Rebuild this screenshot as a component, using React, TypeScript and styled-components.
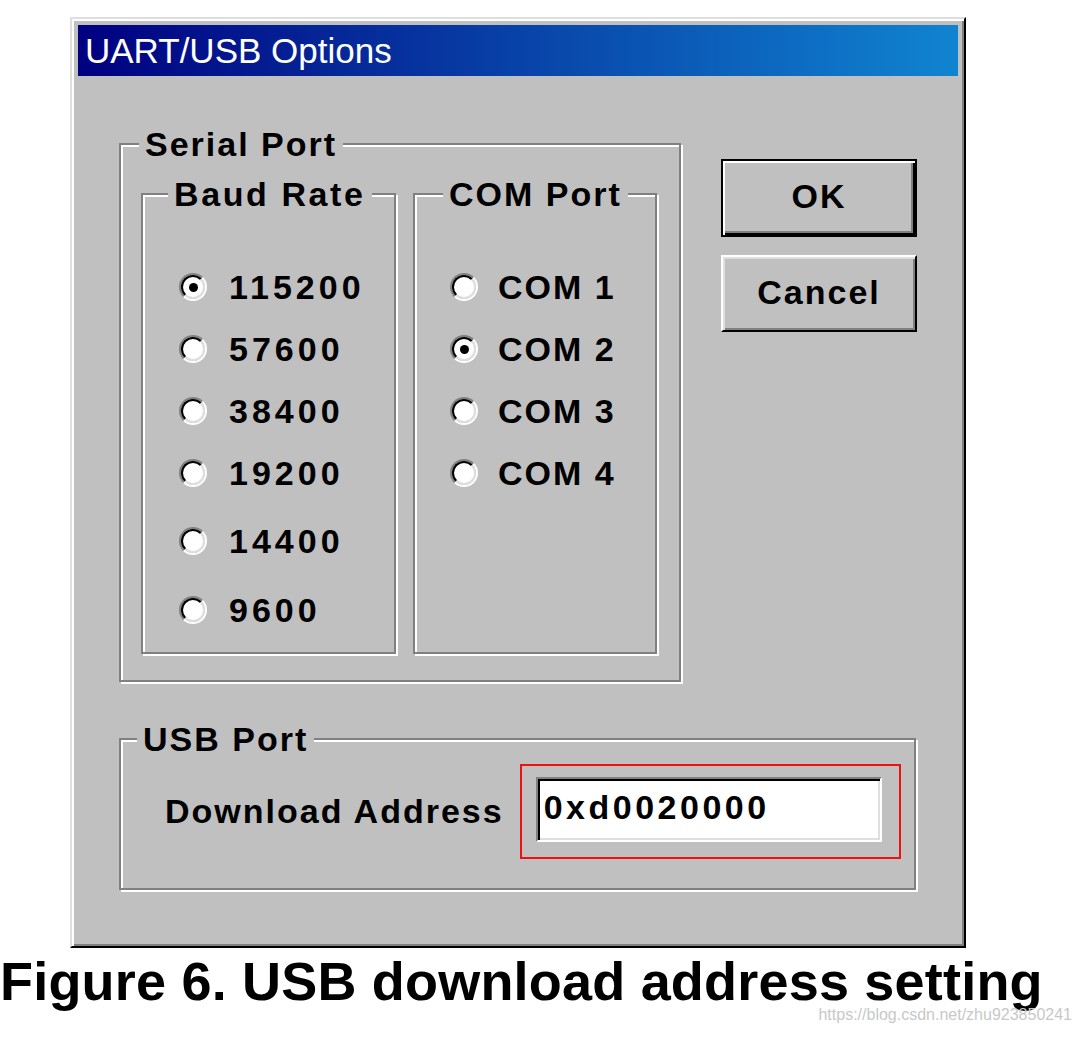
import React, { useState } from 'react';
import styled, { createGlobalStyle } from 'styled-components';

const GlobalStyle = createGlobalStyle`
	html, body {
		margin: 0;
		padding: 0;
		background: #fff;
	}
	body {
		font-family: 'Liberation Sans', Arial, sans-serif;
	}
	*, *::before, *::after {
		box-sizing: border-box;
	}
`;

const BAUD_RATES = ['115200', '57600', '38400', '19200', '14400', '9600'];
const COM_PORTS = ['COM 1', 'COM 2', 'COM 3', 'COM 4'];
// the last two baud rows sit a bit lower in the original dialog
const BAUD_OFFSETS = [0, 0, 0, 0, 6, 7];

const App: React.FC = () => {
	const [baud, setBaud] = useState<string>('115200');
	const [port, setPort] = useState<string>('COM 2');

	return (
		<SPage>
			<GlobalStyle />
			<SDialog>
				<STitleBar>UART/USB Options</STitleBar>
				<SBody>
					<STopRow>
						<SGroup $w={562} $h={539} $pad='48px 0 0 20px'>
							<SLegend $left={18}>Serial Port</SLegend>
							<SSubRow>
								<SGroup $w={255} $h={461} $pad='61px 0 0 36px'>
									<SLegend $left={25} $ls={2.6}>
										Baud Rate
									</SLegend>
									<SRadioList>
										{BAUD_RATES.map((rate, i) => (
											<SRadioRow key={rate} $mt={BAUD_OFFSETS[i]} $gap={22} onClick={() => setBaud(rate)}>
												<SRadio>
													<SRadioInner>{baud === rate && <SDot />}</SRadioInner>
												</SRadio>
												<SText $ls={4}>{rate}</SText>
											</SRadioRow>
										))}
									</SRadioList>
								</SGroup>
								<SGroup $w={244} $h={461} $pad='61px 0 0 35px'>
									<SLegend $left={28}>COM Port</SLegend>
									<SRadioList>
										{COM_PORTS.map((p) => (
											<SRadioRow key={p} $mt={0} $gap={20} onClick={() => setPort(p)}>
												<SRadio>
													<SRadioInner>{port === p && <SDot />}</SRadioInner>
												</SRadio>
												<SText $ls={2}>{p}</SText>
											</SRadioRow>
										))}
									</SRadioList>
								</SGroup>
							</SSubRow>
						</SGroup>
						<SButtons>
							<SButton type='button' $default>
								OK
							</SButton>
							<SButton type='button'>Cancel</SButton>
						</SButtons>
					</STopRow>
					<SGroup $w={797} $h={152} $pad='24px 0 0 44px' style={{ marginTop: 56 }}>
						<SLegend $left={16}>USB Port</SLegend>
						<SAddressRow>
							<SText $ls={2}>Download Address</SText>
							<SHighlight>
								<SField>0xd0020000</SField>
							</SHighlight>
						</SAddressRow>
					</SGroup>
				</SBody>
			</SDialog>
			<SCaption>Figure 6. USB download address setting</SCaption>
			<SWatermark>https://blog.csdn.net/zhu923850241</SWatermark>
		</SPage>
	);
};

export default App;

const SPage = styled.div`
	width: 1088px;
	padding-top: 17px;
`;

const SDialog = styled.div`
	margin-left: 70px;
	width: 896px;
	height: 931px;
	padding: 6px;
	background: #c0c0c0;
	border: 2px solid;
	border-color: #dfdfdf #000 #000 #dfdfdf;
	box-shadow: inset 2px 2px 0 #fff, inset -2px -2px 0 #808080;
`;

const STitleBar = styled.div`
	display: flex;
	align-items: center;
	height: 51px;
	padding-left: 7px;
	background: linear-gradient(to right, #000080, #1084d0);
	color: #fff;
	font-size: 35px;
	white-space: nowrap;
`;

const SBody = styled.div`
	padding: 67px 41px 0 41px;
`;

const STopRow = styled.div`
	display: flex;
	align-items: flex-start;
	gap: 40px;
`;

const SGroup = styled.div<{ $w: number; $h: number; $pad: string }>`
	position: relative;
	flex: none;
	width: ${(p) => p.$w}px;
	height: ${(p) => p.$h}px;
	padding: ${(p) => p.$pad};
	border: 2px solid #808080;
	box-shadow: inset 2px 2px 0 #fff, 2px 2px 0 #fff;
`;

const SLegend = styled.span<{ $left: number; $ls?: number }>`
	position: absolute;
	top: -18px;
	left: ${(p) => p.$left}px;
	padding: 0 6px;
	background: #c0c0c0;
	font-size: 34px;
	font-weight: 700;
	line-height: 34px;
	letter-spacing: ${(p) => p.$ls ?? 2}px;
	white-space: nowrap;
	color: #000;
`;

const SSubRow = styled.div`
	display: flex;
	gap: 17px;
`;

const SRadioList = styled.div`
	display: flex;
	flex-direction: column;
`;

const SRadioRow = styled.label<{ $mt: number; $gap: number }>`
	display: flex;
	align-items: center;
	gap: ${(p) => p.$gap}px;
	height: 62px;
	margin-top: ${(p) => p.$mt}px;
	cursor: default;
`;

const SRadio = styled.span`
	flex: none;
	width: 28px;
	height: 28px;
	border-radius: 50%;
	border: 2px solid;
	border-color: #808080 #fff #fff #808080;
`;

const SRadioInner = styled.span`
	display: flex;
	align-items: center;
	justify-content: center;
	width: 100%;
	height: 100%;
	border-radius: 50%;
	border: 2px solid;
	border-color: #000 #dfdfdf #dfdfdf #000;
	background: #fff;
`;

const SDot = styled.span`
	width: 9px;
	height: 9px;
	border-radius: 50%;
	background: #000;
`;

const SText = styled.span<{ $ls: number }>`
	font-size: 34px;
	font-weight: 700;
	letter-spacing: ${(p) => p.$ls}px;
	color: #000;
	white-space: nowrap;
`;

const SButtons = styled.div`
	display: flex;
	flex-direction: column;
	gap: 18px;
	margin-top: 16px;
`;

const SButton = styled.button<{ $default?: boolean }>`
	display: flex;
	align-items: center;
	justify-content: center;
	width: 196px;
	height: ${(p) => (p.$default ? 78 : 77)}px;
	padding: 0 0 3px;
	background: #c0c0c0;
	font-family: 'Liberation Sans', Arial, sans-serif;
	font-size: 34px;
	font-weight: 700;
	letter-spacing: 2px;
	color: #000;
	border: 2px solid;
	border-color: ${(p) => (p.$default ? '#000' : '#fff #000 #000 #fff')};
	box-shadow: ${(p) =>
		p.$default
			? 'inset 2px 2px 0 #fff, inset -2px -2px 0 #000, inset -4px -4px 0 #808080'
			: 'inset 2px 2px 0 #dfdfdf, inset -2px -2px 0 #808080'};
`;

const SAddressRow = styled.div`
	display: flex;
	align-items: center;
	gap: 16px;
`;

const SHighlight = styled.div`
	flex: none;
	width: 381px;
	height: 95px;
	padding: 11px 0 0 14px;
	border: 2px solid #f01010;
`;

const SField = styled.div`
	display: flex;
	align-items: center;
	width: 346px;
	height: 65px;
	padding: 0 0 4px 6px;
	background: #fff;
	border: 2px solid;
	border-color: #808080 #fff #fff #808080;
	box-shadow: inset 2px 2px 0 #000, inset -2px -2px 0 #dfdfdf;
	font-size: 34px;
	font-weight: 700;
	letter-spacing: 3.5px;
	color: #000;
`;

const SCaption = styled.div`
	margin-top: 9px;
	font-size: 54px;
	font-weight: 700;
	line-height: 48px;
	letter-spacing: 0.2px;
	color: #000;
	white-space: nowrap;
`;

const SWatermark = styled.div`
	margin-top: 1px;
	padding-right: 16px;
	text-align: right;
	font-size: 16px;
	line-height: 18px;
	color: #c8c8c8;
`;
